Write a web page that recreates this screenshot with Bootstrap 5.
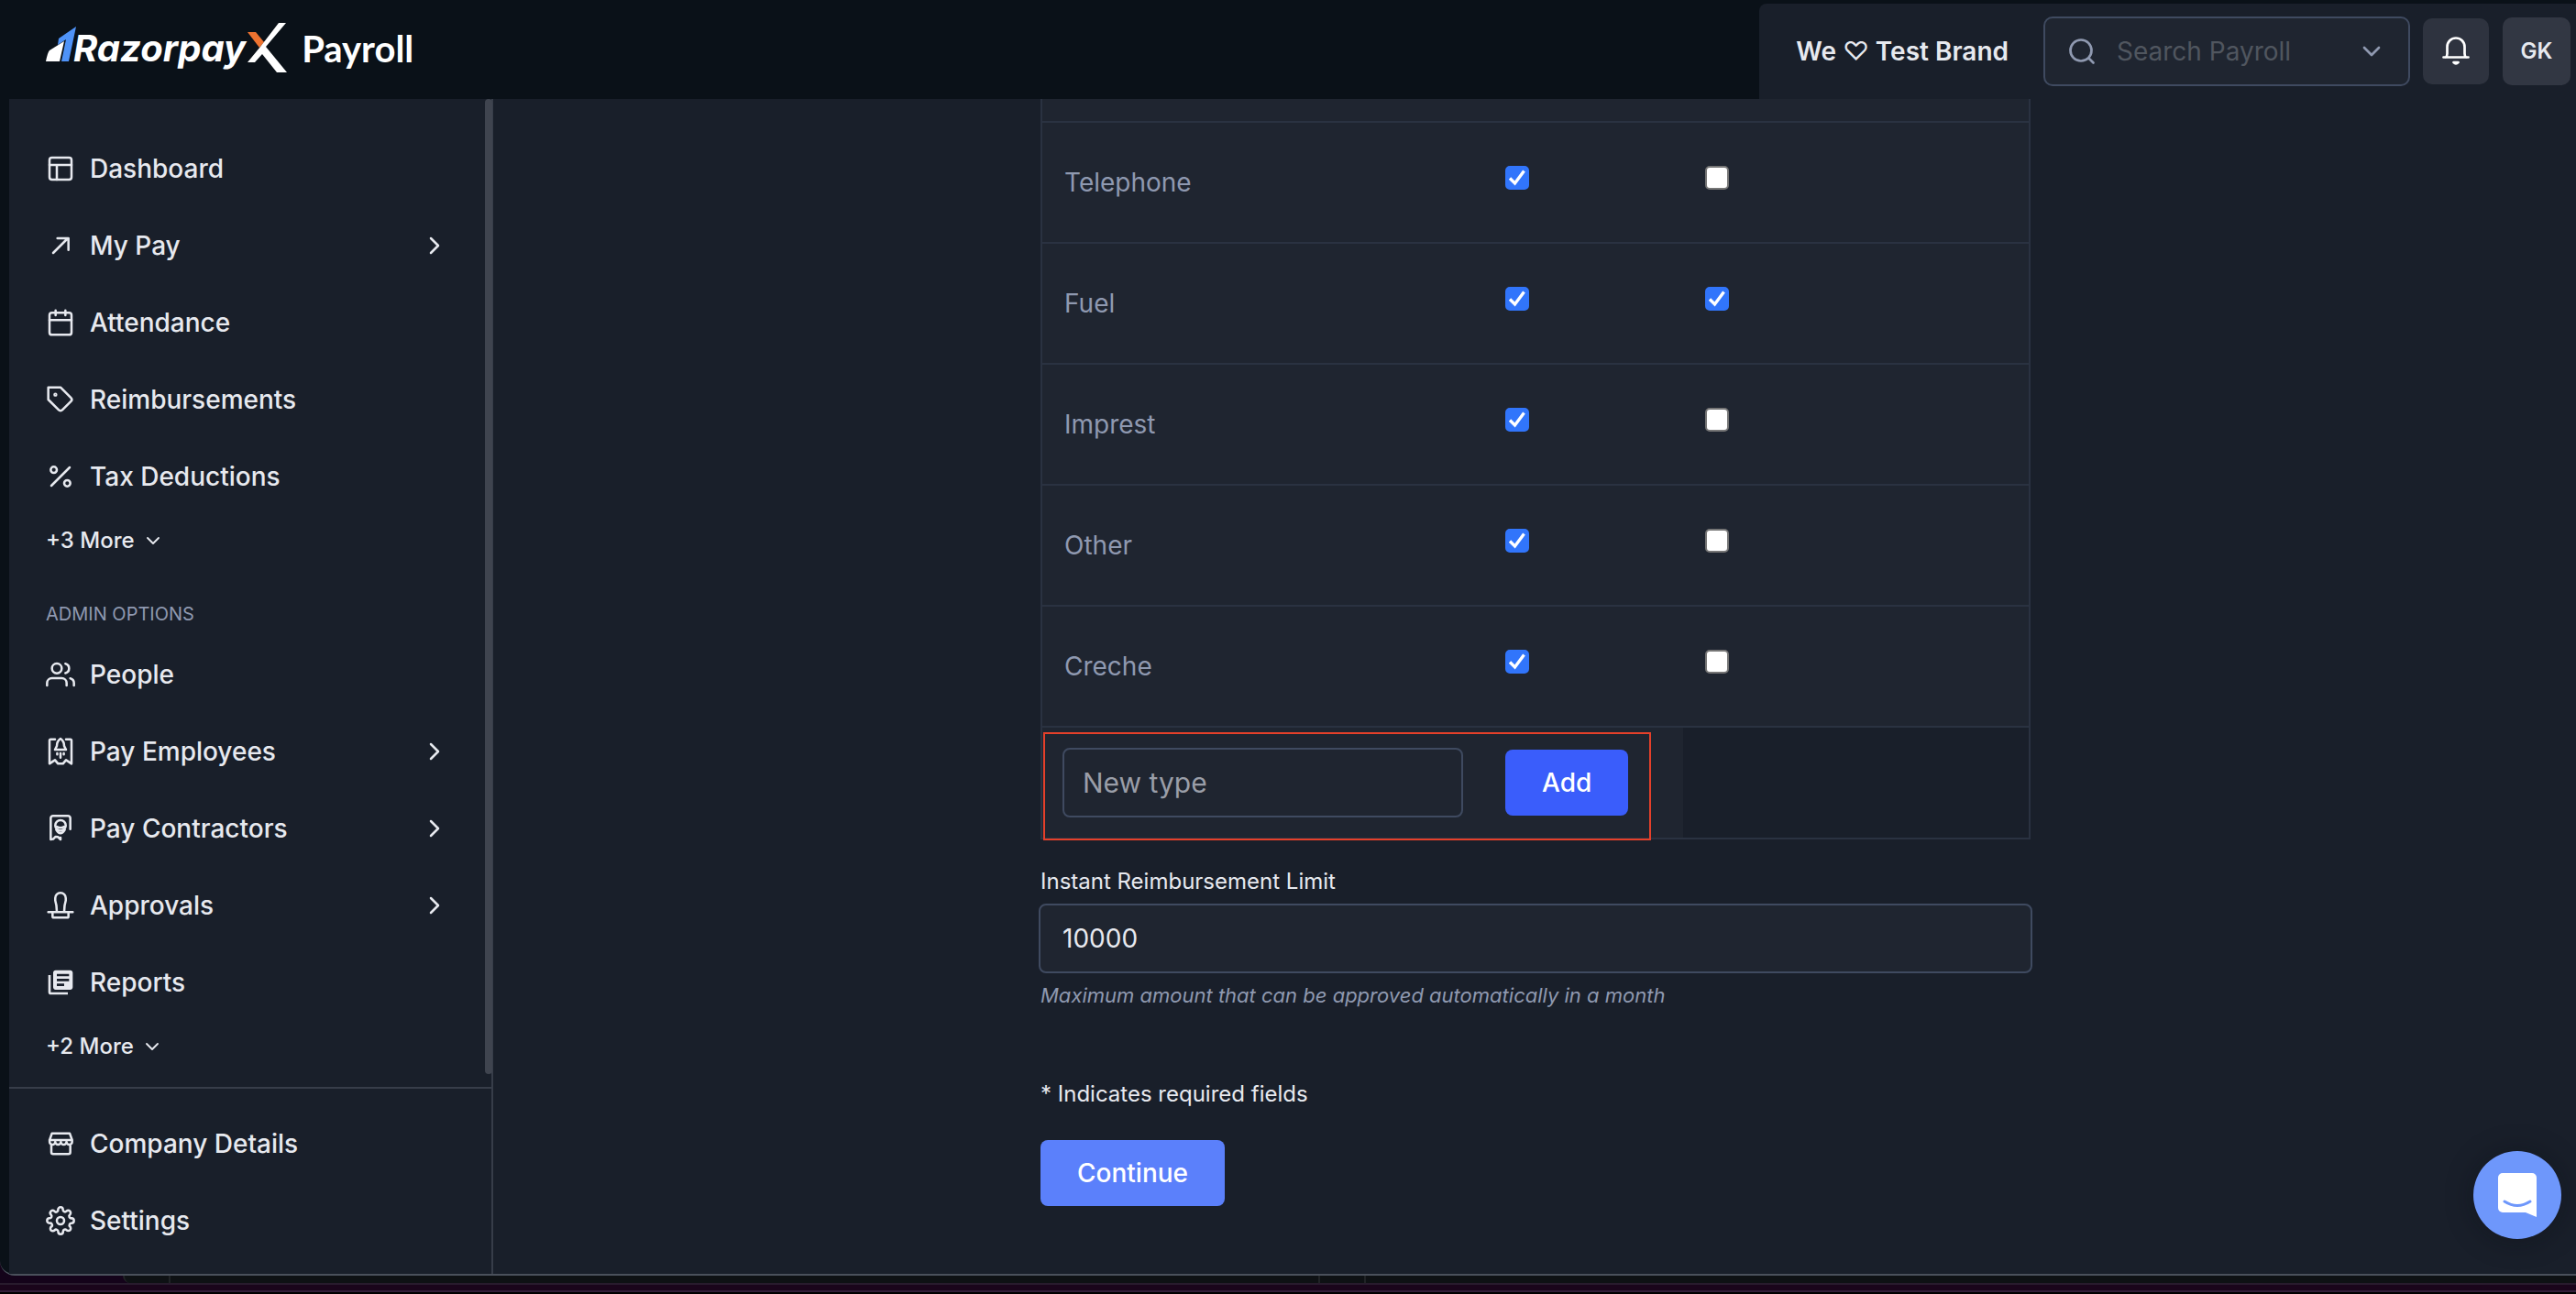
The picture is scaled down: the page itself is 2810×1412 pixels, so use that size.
<!DOCTYPE html>
<html lang="en">
<head>
<meta charset="utf-8">
<meta name="viewport" content="width=device-width, initial-scale=1">
<title>RazorpayX Payroll</title>
<link href="https://cdn.jsdelivr.net/npm/bootstrap@5.3.0/dist/css/bootstrap.min.css" rel="stylesheet">
<style>
:root{--page:#191f2a;--panel:#1f2530;--edge:#2a3241;--field:#3f4a60;--ink:#e7e9ef;--muted:#8f99b0;--night:#0a1118}
body{background:#14031a;color:var(--ink);font-family:Inter,"Liberation Sans",sans-serif;font-size:28px;line-height:36px;overflow:hidden}
a{color:inherit;text-decoration:none}
svg{display:block;flex:none;fill:none;stroke:currentColor;stroke-width:2;stroke-linecap:round;stroke-linejoin:round}
svg.solid-art{stroke:none}
svg.bold-line{stroke-width:2.7}
.app-window{background:var(--night);border-bottom:2px solid #4a505b;border-bottom-left-radius:16px;padding-left:10px;min-height:0}
.top-bar{height:108px;padding:4px 0 0 38px}
.brand-word{font-size:40px;line-height:48px;color:#fff}
.brand-name{font-weight:700;font-style:italic;margin:25px 0 0 -4px}
.brand-product{font-family:Lato,sans-serif;font-weight:700;margin:25px 0 0 15px}
.account-bar{background:var(--page);border-top-left-radius:8px;padding:0 6px 0 40px}
.org-name{font-weight:600;margin-right:38px}
.org-heart{font-weight:400}
.search-box{width:400px;height:76px;background:var(--panel);border:2px solid var(--field);border-radius:10px;padding:0 26px;margin-right:14px}
.search-box input{background:none;border:0;outline:0;color:var(--ink);min-width:0;padding:0 0 0 22px}
.search-box input::placeholder{color:#50565f}
.search-box svg{color:var(--muted)}
.square-btn{width:72px;height:72px;border:0;border-radius:10px;background:#2e333f;color:#fff;font-size:24px;font-weight:600}
.user-btn{width:74px;height:74px;background:#323743;margin-left:15px;color:var(--ink)}
.work-area{min-height:0}
.side-bar{width:528px;background:var(--page);border-right:2px solid #373d49}
.side-scroll{padding-top:34px}
.side-link{height:84px;padding:0 46px 0 40px;gap:16px;font-weight:500}
.side-link svg,.more-btn svg{stroke-width:1.9}
.more-btn{height:56px;padding:0 40px;gap:10px;border:0;background:none;color:inherit;font-size:24px;font-weight:500}
.side-title{font-size:20px;font-weight:400;line-height:48px;color:var(--muted);padding:28px 40px 0;margin:0}
.scroll-thumb{right:-1px;top:0;bottom:14px;width:8px;background:#3f444f;border-radius:4px}
.side-foot{border-top:2px solid #373d49;padding:18px 0 16px}
.main-pane{background:var(--page);padding-left:2px}
.settings-form{max-width:1084px}
.type-table{width:calc(100% - 4px);margin:0 2px;table-layout:fixed;border-collapse:separate;border-spacing:0;border:2px solid var(--edge);border-width:0 2px}
.type-table td,.type-table th{background:var(--panel);border-bottom:2px solid var(--edge);padding:0 24px;height:132px;vertical-align:middle;font-weight:400;color:var(--muted)}
.type-table .cut-row td{height:26px}
.type-table .new-row td{height:122px}
.type-table .new-row td:first-child{padding:0 22px}
.type-table .new-row td:last-child{background:none}
.col-type{width:481px}
.col-flag{width:218px}
.type-table .form-check-input{display:block;width:26px;height:26px;margin:0 0 10px;background-color:#fff;border:2px solid #767676;border-radius:5px}
.type-table .form-check-input:checked{background-color:#3175fb;border-color:#3175fb;background-origin:border-box;background-size:26px 26px;background-image:url("data:image/svg+xml,%3csvg xmlns='http://www.w3.org/2000/svg' viewBox='0 0 26 26'%3e%3cpath fill='none' stroke='%23fff' stroke-width='3.4' d='M5 13.5 10.500 19 20.500 5.500'/%3e%3c/svg%3e")}
.field{display:block;height:76px;width:100%;background:var(--panel);border:2px solid var(--field);border-radius:8px;color:var(--ink);outline:0}
.new-field{font-size:30px;padding:0 20px}
.new-field::placeholder{color:#9a9ea8}
.limit-field{padding:0 24px}
.solid-btn{height:72px;border:0;border-radius:8px;padding:0 40px;color:#fff;font-weight:500}
.add-btn{background:#3a5dfb}
.continue-btn{background:#5b80fb;margin:32px 2px 0}
.highlight-box{left:5px;bottom:-1px;width:663px;height:118px;border:2px solid #e5402a;pointer-events:none}
.limit-label{font-size:24px;margin:28px 2px 6px;display:block}
.help-line{font-size:22px;line-height:32px;font-style:italic;color:var(--muted);margin:8px 2px 0}
.need-line{font-size:24px;margin:74px 2px 0}
.chat-btn{right:16px;bottom:60px;width:96px;height:96px;border:0;border-radius:50%;background:#6e97fb;box-shadow:0 2px 30px rgba(8,12,16,.35)}
.chat-smile{stroke:#6e97fb;stroke-width:3}
.desk-row{height:8px;background:#14031a;padding-left:134px}
.desk-pane{background:#0e1114;border-left:2px solid #202326}
.desk-pane:first-child{border-bottom-left-radius:8px}
.desk-edge{height:12px;background:#1a051b;border-top:2px solid #281b2d;border-bottom:2px solid #000;box-shadow:inset 0 -2px #33203a}
</style>
</head>
<body class="vh-100 d-flex flex-column">
<div class="app-window flex-grow-1 d-flex flex-column">
  <header class="top-bar d-flex justify-content-between flex-shrink-0">
    <a href="#" class="brand-word d-flex align-items-start" aria-label="RazorpayX Payroll">
      <svg class="solid-art" width="36" height="92" viewBox="48 4 36 92"><path fill="#4f93f8" d="M83 29 64 42l-1 7 9-6-5 24h8z"/><path fill="#fff" d="M70 45 54 55q-2 2-4 12h15z"/></svg>
      <span class="brand-name">Razorpay</span>
      <svg class="solid-art" width="46" height="92" viewBox="267 4 46 92"><path fill="#ee7330" d="M269 35h9l9 11-5 6z"/><path fill="#fff" d="M303 25h8L289 51l23 28h-11l-16-20-8 9h-8l14-17z"/></svg>
      <span class="brand-product">Payroll</span>
    </a>
    <div class="account-bar d-flex align-items-center">
      <span class="org-name">We <span class="org-heart">♡</span> Test Brand</span>
      <div class="search-box d-flex align-items-center">
        <svg class="bold-line" width="30" height="32" viewBox="0 0 30 32"><circle cx="13" cy="15" r="11.500"/><path d="m21.500 23.500 5 5"/></svg>
        <input type="search" class="flex-grow-1" placeholder="Search Payroll" aria-label="Search Payroll">
        <svg class="bold-line" width="28" height="28" viewBox="0 0 28 28"><path d="m6 10 8 8 8-8"/></svg>
      </div>
      <button class="square-btn d-flex align-items-center justify-content-center" aria-label="Notifications"><svg class="bold-line" width="32" height="32" viewBox="0 0 32 32"><path d="M2.500 22.500h27M5 22.500q1.500-1 1.500-4V11a9.500 9.500 0 0 1 19 0v7.500q0 3 1.500 4M13.500 28q2.500 2.500 5 0z"/></svg></button>
      <button class="square-btn user-btn p-0">GK</button>
    </div>
  </header>
  <div class="work-area d-flex flex-grow-1">
    <aside class="side-bar d-flex flex-column flex-shrink-0">
      <nav class="side-scroll flex-grow-1 position-relative">
        <a href="#" class="side-link d-flex align-items-center"><svg width="32" height="32" viewBox="0 0 24 24"><rect x="3" y="3" width="18" height="18" rx="2"/><path d="M3 9h18M9 21V9"/></svg><span>Dashboard</span></a>
        <a href="#" class="side-link d-flex align-items-center"><svg width="32" height="32" viewBox="0 0 24 24"><path d="M6 18 18 6M9.500 6H18.500V15.500"/></svg><span class="flex-grow-1">My Pay</span><svg width="32" height="32" viewBox="0 0 24 24"><path d="m9 6 6 6-6 6"/></svg></a>
        <a href="#" class="side-link d-flex align-items-center"><svg width="32" height="32" viewBox="0 0 24 24"><rect x="3" y="4" width="18" height="18" rx="2"/><path d="M16 2v4M8 2v4M3 10h18"/></svg><span>Attendance</span></a>
        <a href="#" class="side-link d-flex align-items-center"><svg width="32" height="32" viewBox="0 0 24 24"><path d="M20.590 13.410l-7.170 7.170a2 2 0 0 1-2.830 0L2 12V2h10l8.590 8.590a2 2 0 0 1 0 2.820z"/><circle cx="7.800" cy="8" r=".7"/></svg><span>Reimbursements</span></a>
        <a href="#" class="side-link d-flex align-items-center"><svg width="32" height="32" viewBox="0 0 24 24"><path d="M19.500 4.500l-15 15"/><circle cx="6.500" cy="6.500" r="2.500"/><circle cx="17.500" cy="17.500" r="2.500"/></svg><span>Tax Deductions</span></a>
        <button class="more-btn d-flex align-items-center">+3 More <svg width="20" height="20" viewBox="0 0 20 20"><path d="m4 7 6 6 6-6"/></svg></button>
        <h2 class="side-title">ADMIN OPTIONS</h2>
        <a href="#" class="side-link d-flex align-items-center"><svg width="32" height="32" viewBox="0 0 24 24"><path d="M17 21v-2a4 4 0 0 0-4-4H5a4 4 0 0 0-4 4v2M23 21v-2a4 4 0 0 0-3-3.870M16 3.130a4 4 0 0 1 0 7.750"/><circle cx="9" cy="7" r="4"/></svg><span>People</span></a>
        <a href="#" class="side-link d-flex align-items-center"><svg width="32" height="32" viewBox="0 0 24 24"><path d="M7.500 2H4a1 1 0 0 0-1 1V22l3-2 1.500-1 2.500 3h4l2.500-3L18 20l3 2V3a1 1 0 0 0-1-1h-3.500M12 1.500Q9 3.500 9 7.500L7.500 10.500h9L15 7.500Q15 3.500 12 1.500zM12 13.500v3.500M9.300 13.500v1M14.700 13.500v1"/></svg><span class="flex-grow-1">Pay Employees</span><svg width="32" height="32" viewBox="0 0 24 24"><path d="m9 6 6 6-6 6"/></svg></a>
        <a href="#" class="side-link d-flex align-items-center"><svg width="32" height="32" viewBox="0 0 24 24"><path d="M20 12.500V3.500A2 2 0 0 0 18 1.700H6A2 2 0 0 0 4 3.500V21l2-.3 2-2 2 .3 2 2v-1.500"/><circle cx="12" cy="9.500" r="4.300"/><path d="M8.500 13q3.500 6 7 0M9 10.500q3 2 6 0"/></svg><span class="flex-grow-1">Pay Contractors</span><svg width="32" height="32" viewBox="0 0 24 24"><path d="m9 6 6 6-6 6"/></svg></a>
        <a href="#" class="side-link d-flex align-items-center"><svg width="32" height="32" viewBox="0 0 24 24"><path d="M2 17.500h20M5.500 17.500V21a1 1 0 0 0 1 1h11a1 1 0 0 0 1-1v-3.500M9 17Q9 12 7.700 8V6a4.300 4.300 0 0 1 8.600 0v2Q15 12 15 17"/></svg><span class="flex-grow-1">Approvals</span><svg width="32" height="32" viewBox="0 0 24 24"><path d="m9 6 6 6-6 6"/></svg></a>
        <a href="#" class="side-link d-flex align-items-center"><svg class="solid-art" width="32" height="32" viewBox="0 0 24 24"><path fill="currentColor" d="M4 6H2v14c0 1.100.9 2 2 2h14v-2H4V6zm16-4H8c-1.100 0-2 .9-2 2v12c0 1.100.9 2 2 2h12c1.100 0 2-.9 2-2V4c0-1.100-.9-2-2-2zm-1 9H9V9h10v2zm-4 4H9v-2h6v2zm4-8H9V5h10v2z"/></svg><span>Reports</span></a>
        <button class="more-btn d-flex align-items-center">+2 More <svg width="20" height="20" viewBox="0 0 20 20"><path d="m4 7 6 6 6-6"/></svg></button>
        <div class="scroll-thumb position-absolute"></div>
      </nav>
      <nav class="side-foot">
        <a href="#" class="side-link d-flex align-items-center"><svg width="32" height="32" viewBox="0 0 24 24"><path d="M5 3.500h14.500L21.500 9v1.500a2.300 2.300 0 0 1-4.600 0 2.300 2.300 0 0 1-4.600 0 2.300 2.300 0 0 1-4.600 0 2.300 2.300 0 0 1-4.600 0V9zM3 9h18.500M4.500 13v6a1.500 1.500 0 0 0 1.500 1.500h12.500a1.500 1.500 0 0 0 1.500-1.500v-6"/></svg><span>Company Details</span></a>
        <a href="#" class="side-link d-flex align-items-center"><svg width="32" height="32" viewBox="0 0 24 24"><circle cx="12" cy="12" r="3"/><path d="M19.400 15a1.650 1.650 0 0 0 .33 1.820l.06.06a2 2 0 1 1-2.830 2.830l-.06-.06a1.650 1.650 0 0 0-2.800 1.170V21a2 2 0 0 1-4 0v-.09a1.650 1.650 0 0 0-2.900-1.080l-.06.06a2 2 0 1 1-2.830-2.830l.06-.06A1.650 1.650 0 0 0 3.090 14H3a2 2 0 0 1 0-4h.09a1.650 1.650 0 0 0 1.180-2.820l-.06-.06a2 2 0 1 1 2.830-2.830l.06.06A1.650 1.650 0 0 0 10 3.090V3a2 2 0 0 1 4 0v.09a1.650 1.650 0 0 0 2.820 1.180l.06-.06a2 2 0 1 1 2.830 2.830l-.06.06A1.650 1.650 0 0 0 20.910 10H21a2 2 0 0 1 0 4h-.09a1.650 1.650 0 0 0-1.510 1z"/></svg><span>Settings</span></a>
      </nav>
    </aside>
    <main class="main-pane flex-grow-1">
      <form class="settings-form mx-auto">
        <div class="position-relative">
          <table class="type-table">
            <colgroup><col class="col-type"><col class="col-flag"><col></colgroup>
            <tbody>
              <tr class="cut-row"><td></td><td></td><td></td></tr>
              <tr><th scope="row">Telephone</th><td><input class="form-check-input" type="checkbox" aria-label="Telephone enabled" checked></td><td><input class="form-check-input" type="checkbox" aria-label="Telephone instant"></td></tr>
              <tr><th scope="row">Fuel</th><td><input class="form-check-input" type="checkbox" aria-label="Fuel enabled" checked></td><td><input class="form-check-input" type="checkbox" aria-label="Fuel instant" checked></td></tr>
              <tr><th scope="row">Imprest</th><td><input class="form-check-input" type="checkbox" aria-label="Imprest enabled" checked></td><td><input class="form-check-input" type="checkbox" aria-label="Imprest instant"></td></tr>
              <tr><th scope="row">Other</th><td><input class="form-check-input" type="checkbox" aria-label="Other enabled" checked></td><td><input class="form-check-input" type="checkbox" aria-label="Other instant"></td></tr>
              <tr><th scope="row">Creche</th><td><input class="form-check-input" type="checkbox" aria-label="Creche enabled" checked></td><td><input class="form-check-input" type="checkbox" aria-label="Creche instant"></td></tr>
              <tr class="new-row"><td><input type="text" class="field new-field" placeholder="New type" aria-label="New type"></td><td><button type="button" class="solid-btn add-btn d-block">Add</button></td><td></td></tr>
            </tbody>
          </table>
          <div class="highlight-box position-absolute"></div>
        </div>
        <label class="limit-label" for="limit">Instant Reimbursement Limit</label>
        <input type="text" id="limit" class="field limit-field" value="10000">
        <p class="help-line">Maximum amount that can be approved automatically in a month</p>
        <p class="need-line">* Indicates required fields</p>
        <button type="button" class="solid-btn continue-btn d-block">Continue</button>
      </form>
    </main>
  </div>
</div>
<div class="desk-row d-flex flex-shrink-0"><div class="desk-pane" style="width:50px"></div><div class="desk-pane" style="width:1254px"></div><div class="desk-pane" style="width:50px"></div><div class="desk-pane flex-grow-1"></div></div>
<div class="desk-edge flex-shrink-0"></div>
<button class="chat-btn position-absolute p-0 d-flex align-items-center justify-content-center" aria-label="Open chat"><svg class="solid-art" width="42" height="48" viewBox="0 0 42 48"><path fill="#fff" d="M5 0h32a5 5 0 0 1 5 5v43l-12-5H5a5 5 0 0 1-5-5V5a5 5 0 0 1 5-5z"/><path class="chat-smile" d="M7 31q14 9 28 0"/></svg></button>
<script src="https://cdn.jsdelivr.net/npm/bootstrap@5.3.0/dist/js/bootstrap.bundle.min.js"></script>
</body>
</html>
